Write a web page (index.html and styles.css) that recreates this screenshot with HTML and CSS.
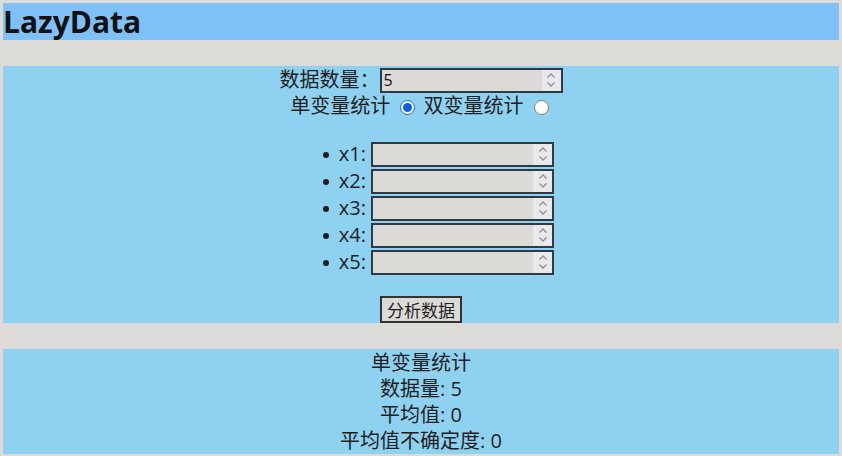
FILE: index.html
```html
<!DOCTYPE html>
<html lang="zh">
<head>
<meta charset="utf-8">
<title>LazyData</title>
<link rel="stylesheet" href="styles.css">
</head>
<body>
<div class="page">
  <header class="top">
    <h1 class="title">LazyData</h1>
  </header>
  <main class="panel form">
    <div class="row">数据数量：<span class="num"><input class="num-input" type="number" value="5"><span class="spin"><svg width="10" height="16" viewBox="0 0 10 16"><path d="M1.5 5.5 L5 2 L8.5 5.5 M1.5 10.5 L5 14 L8.5 10.5" fill="none" stroke="#8f8f94" stroke-width="1.3"/></svg></span></span></div>
    <div class="row">单变量统计 <input class="radio" type="radio" name="mode" checked> 双变量统计 <input class="radio" type="radio" name="mode"></div>
    <ul class="vals">
      <li>x1: <span class="num"><input class="num-input" type="number"><span class="spin"><svg width="10" height="16" viewBox="0 0 10 16"><path d="M1.5 5.5 L5 2 L8.5 5.5 M1.5 10.5 L5 14 L8.5 10.5" fill="none" stroke="#8f8f94" stroke-width="1.3"/></svg></span></span></li>
      <li>x2: <span class="num"><input class="num-input" type="number"><span class="spin"><svg width="10" height="16" viewBox="0 0 10 16"><path d="M1.5 5.5 L5 2 L8.5 5.5 M1.5 10.5 L5 14 L8.5 10.5" fill="none" stroke="#8f8f94" stroke-width="1.3"/></svg></span></span></li>
      <li>x3: <span class="num"><input class="num-input" type="number"><span class="spin"><svg width="10" height="16" viewBox="0 0 10 16"><path d="M1.5 5.5 L5 2 L8.5 5.5 M1.5 10.5 L5 14 L8.5 10.5" fill="none" stroke="#8f8f94" stroke-width="1.3"/></svg></span></span></li>
      <li>x4: <span class="num"><input class="num-input" type="number"><span class="spin"><svg width="10" height="16" viewBox="0 0 10 16"><path d="M1.5 5.5 L5 2 L8.5 5.5 M1.5 10.5 L5 14 L8.5 10.5" fill="none" stroke="#8f8f94" stroke-width="1.3"/></svg></span></span></li>
      <li>x5: <span class="num"><input class="num-input" type="number"><span class="spin"><svg width="10" height="16" viewBox="0 0 10 16"><path d="M1.5 5.5 L5 2 L8.5 5.5 M1.5 10.5 L5 14 L8.5 10.5" fill="none" stroke="#8f8f94" stroke-width="1.3"/></svg></span></span></li>
    </ul>
    <button class="btn" type="button">分析数据</button>
  </main>
  <section class="panel result">
    <div class="line">单变量统计</div>
    <div class="line">数据量: 5</div>
    <div class="line">平均值: 0</div>
    <div class="line">平均值不确定度: 0</div>
  </section>
</div>
</body>
</html>
```

FILE: styles.css
```css
html, body {
  margin: 0;
  padding: 0;
  background: #dddbd8;
}
body {
  font-family: "Open Sans", "Noto Sans CJK SC", sans-serif;
  font-size: 20px;
  color: #1e1e1e;
}
.page {
  display: flex;
  flex-direction: column;
  gap: 26px;
  padding: 3px;
}
.top {
  background: #7fc1f7;
  height: 37px;
}
.title {
  margin: 0;
  font-size: 30px;
  font-weight: 700;
  line-height: 37px;
  color: #111;
}
.panel {
  background: #8fd1f1;
  text-align: center;
}
.form {
  padding-top: 1px;
}
.row {
  height: 26px;
  line-height: 26px;
}
.num {
  display: inline-flex;
  vertical-align: middle;
  width: 183px;
  height: 25px;
  box-sizing: border-box;
  border: 2px solid #2e3b44;
  background: #dcdad7;
  margin-top: -3px;
}
.num-input {
  flex: 1;
  min-width: 0;
  border: 0;
  background: transparent;
  font-family: "Open Sans", sans-serif;
  font-size: 16px;
  color: #111;
  padding: 0 2px;
  margin: 0;
  outline: none;
  -moz-appearance: textfield;
}
.num-input::-webkit-inner-spin-button,
.num-input::-webkit-outer-spin-button {
  -webkit-appearance: none;
  margin: 0;
}
.spin {
  width: 19px;
  background: #e9e8ec;
  display: flex;
  align-items: center;
  justify-content: center;
}
.radio {
  width: 15px;
  height: 15px;
  margin: 0 3px 0 5px;
  vertical-align: -2px;
  accent-color: #0b5fd8;
}
.vals {
  margin: 21px 0 0 0;
  padding-left: 35px;
  list-style: none;
}
.vals li {
  height: 27px;
  line-height: 27px;
}
.vals li::before {
  content: "";
  display: inline-block;
  width: 6px;
  height: 6px;
  border-radius: 50%;
  background: #1e1e1e;
  margin-right: 10px;
  vertical-align: 3px;
}
.btn {
  margin-top: 21px;
  font-family: "Noto Sans CJK SC", sans-serif;
  font-size: 17px;
  line-height: 21px;
  height: 27px;
  padding: 0 5px;
  border: 2px solid #333;
  background: #dcdad7;
  color: #1e1e1e;
  display: inline-block;
  vertical-align: top;
}
.result {
  padding-top: 1px;
}
.line {
  line-height: 26px;
}
```
